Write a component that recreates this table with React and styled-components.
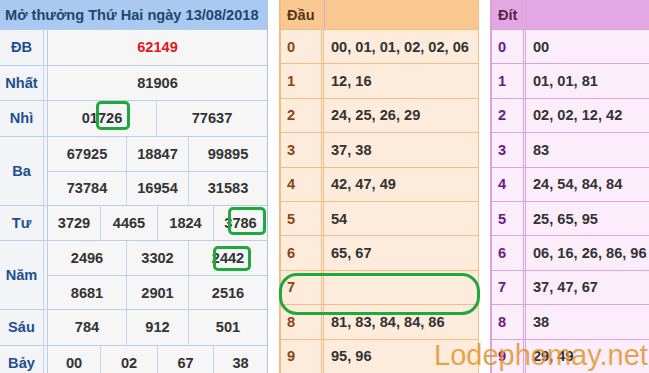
import React from "react";
import styled, { createGlobalStyle } from "styled-components";

const Global = createGlobalStyle`
  html, body { margin: 0; padding: 0; background: #ffffff; overflow: hidden; }
  body { font-family: "Liberation Sans", Arial, sans-serif; }
  * { box-sizing: border-box; }
`;

const FS = "14.6px";

const Page = styled.div`
  position: relative;
  width: 649px;
  height: 373px;
  overflow: hidden;
  display: flex;
  align-items: flex-start;
  background: #fff;
`;

/* ---------- Left result board ---------- */
const Board = styled.div`
  width: 268px;
  flex: none;
  border-right: 1px solid #a9c4e6;
  background: #f6f6f7;
`;

const BoardHead = styled.div`
  height: 30px;
  background: #a9c9f0;
  color: #24476f;
  font-weight: bold;
  font-size: ${FS};
  display: flex;
  align-items: center;
  padding-left: 5px;
  white-space: nowrap;
  border-bottom: 1px solid #b5cde9;
`;

const Prize = styled.div`
  display: flex;
  border-bottom: 1px solid #b9cfe9;
`;

const Label = styled.div`
  width: 44px;
  flex: none;
  display: flex;
  align-items: center;
  justify-content: center;
  color: #1d4f8f;
  font-weight: bold;
  font-size: ${FS};
  border-right: 1px solid #c4d6ec;
  background: #f3f4f7;
`;

const Gap = styled.div`
  width: 4px;
  flex: none;
  background: #f3f4f7;
  border-right: 1px solid #b9cfe9;
`;

const Data = styled.div`
  flex: 1;
  display: flex;
  flex-direction: column;
`;

const SubRow = styled.div`
  height: ${(p) => p.$h || 34.5}px;
  display: grid;
  grid-template-columns: ${(p) => p.$cols};
  & + & { border-top: 1px solid #b9cfe9; }
`;

const Num = styled.div`
  display: flex;
  align-items: center;
  justify-content: center;
  font-weight: bold;
  font-size: ${FS};
  color: ${(p) => (p.$red ? "#e3171f" : "#333333")};
  & + & { border-left: 1px solid #c4d6ec; }
`;

/* ---------- Loto tables ---------- */
const Loto = styled.div`
  flex: none;
  width: ${(p) => p.$w}px;
  margin-left: ${(p) => p.$ml}px;
  border-left: 2px solid ${(p) => p.$line};
  border-right: 1px solid ${(p) => p.$line};
  background: ${(p) => p.$bg};
`;

const LotoHead = styled.div`
  height: 30px;
  display: grid;
  grid-template-columns: ${(p) => p.$first}px 1fr;
  background: ${(p) => p.$bg};
  border-bottom: 1px solid ${(p) => p.$line};
`;

const HeadCell = styled.div`
  display: flex;
  align-items: center;
  padding-left: 6px;
  font-weight: bold;
  font-size: ${FS};
  color: ${(p) => p.$color};
  & + & { border-left: 1px solid ${(p) => p.$line}; }
`;

const LotoRow = styled.div`
  height: 34.4px;
  display: grid;
  grid-template-columns: ${(p) => p.$first}px 1fr;
  border-bottom: 1px solid ${(p) => p.$line};
`;

const Digit = styled.div`
  display: flex;
  align-items: center;
  padding-left: 6px;
  font-weight: bold;
  font-size: ${FS};
  color: ${(p) => p.$color};
  border-right: 3px double ${(p) => p.$line};
`;

const Values = styled.div`
  display: flex;
  align-items: center;
  padding-left: 7px;
  font-weight: bold;
  font-size: ${FS};
  color: #333;
  white-space: nowrap;
`;

/* ---------- Overlays ---------- */
const Mark = styled.div`
  position: absolute;
  left: ${(p) => p.$x}px;
  top: ${(p) => p.$y}px;
  width: ${(p) => p.$w}px;
  height: ${(p) => p.$h}px;
  border: 3px solid #1fa83e;
  border-radius: ${(p) => p.$r}px;
  pointer-events: none;
`;

const Watermark = styled.div`
  position: absolute;
  left: 434px;
  top: 338px;
  font-family: "Liberation Sans", Arial, sans-serif;
  font-size: 29px;
  line-height: 34px;
  color: rgba(226, 150, 45, 0.86);
  white-space: nowrap;
  pointer-events: none;
`;

const dau = [
  "00, 01, 01, 02, 02, 06",
  "12, 16",
  "24, 25, 26, 29",
  "37, 38",
  "42, 47, 49",
  "54",
  "65, 67",
  "",
  "81, 83, 84, 84, 86",
  "95, 96",
];

const dit = [
  "00",
  "01, 01, 81",
  "02, 02, 12, 42",
  "83",
  "24, 54, 84, 84",
  "25, 65, 95",
  "06, 16, 26, 86, 96",
  "37, 47, 67",
  "38",
  "29, 49",
];

const prizes = [
  { label: "ĐB", rows: [{ cols: "1fr", nums: ["62149"], red: true }] },
  { label: "Nhất", rows: [{ cols: "1fr", nums: ["81906"] }] },
  { label: "Nhì", rows: [{ cols: "108px 1fr", nums: ["01726", "77637"] }] },
  {
    label: "Ba",
    rows: [
      { cols: "78px 62px 1fr", nums: ["67925", "18847", "99895"] },
      { cols: "78px 62px 1fr", nums: ["73784", "16954", "31583"] },
    ],
  },
  { label: "Tư", rows: [{ cols: "52px 57px 56px 1fr", nums: ["3729", "4465", "1824", "3786"] }] },
  {
    label: "Năm",
    rows: [
      { cols: "78px 62px 1fr", nums: ["2496", "3302", "2442"] },
      { cols: "78px 62px 1fr", nums: ["8681", "2901", "2516"] },
    ],
  },
  { label: "Sáu", rows: [{ cols: "78px 62px 1fr", nums: ["784", "912", "501"] }] },
  { label: "Bảy", rows: [{ cols: "52px 57px 56px 1fr", nums: ["00", "02", "67", "38"] }] },
];

function LotoTable({ title, data, w, ml, first, bg, headBg, line, digitColor, headColor }) {
  return (
    <Loto $w={w} $ml={ml} $bg={bg} $line={line}>
      <LotoHead $first={first} $bg={headBg} $line={line}>
        <HeadCell $color={headColor} $line={line}>{title}</HeadCell>
        <HeadCell $color={headColor} $line={line} />
      </LotoHead>
      {data.map((v, i) => (
        <LotoRow key={i} $first={first} $line={line}>
          <Digit $color={digitColor} $line={line}>{i}</Digit>
          <Values>{v}</Values>
        </LotoRow>
      ))}
    </Loto>
  );
}

export default function App() {
  return (
    <>
      <Global />
      <Page>
        <Board>
          <BoardHead>Mở thưởng Thứ Hai ngày 13/08/2018</BoardHead>
          {prizes.map((p) => (
            <Prize key={p.label}>
              <Label>{p.label}</Label>
              <Gap />
              <Data>
                {p.rows.map((r, i) => (
                  <SubRow key={i} $cols={r.cols} $h={p.rows.length > 1 ? 34 : 34.5}>
                    {r.nums.map((n, j) => (
                      <Num key={j} $red={r.red}>{n}</Num>
                    ))}
                  </SubRow>
                ))}
              </Data>
            </Prize>
          ))}
        </Board>

        <LotoTable
          title="Đầu"
          data={dau}
          w={200}
          ml={11}
          first={43}
          bg="#fdebdc"
          headBg="#f9c890"
          line="#f2bd85"
          digitColor="#8a4512"
          headColor="#5b3516"
        />

        <LotoTable
          title="Đít"
          data={dit}
          w={172}
          ml={11}
          first={34}
          bg="#fcedfb"
          headBg="#e2a8e4"
          line="#d9a3dc"
          digitColor="#6d1a86"
          headColor="#5a2346"
        />

        <Mark $x={96} $y={101} $w={34} $h={29} $r={5} />
        <Mark $x={228} $y={207} $w={38} $h={28} $r={5} />
        <Mark $x={213} $y={246} $w={38} $h={25} $r={5} />
        <Mark $x={279} $y={273} $w={201} $h={42} $r={18} />

        <Watermark>Lodephomay.net</Watermark>
      </Page>
    </>
  );
}
